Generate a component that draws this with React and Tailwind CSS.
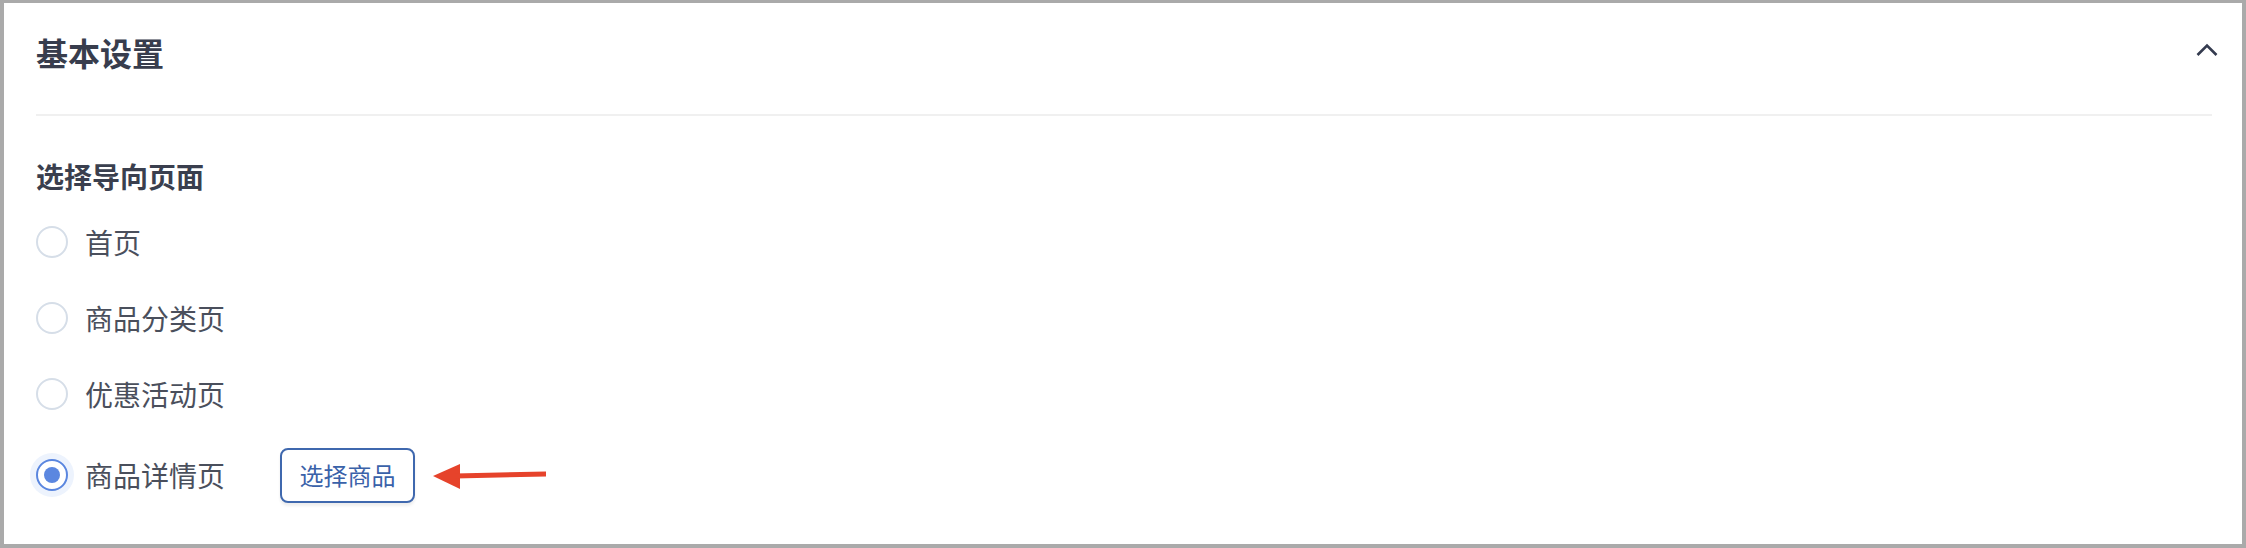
import React, { useState } from "react";

const options = [
  { value: "home", label: "首页" },
  { value: "category", label: "商品分类页" },
  { value: "promo", label: "优惠活动页" },
  { value: "detail", label: "商品详情页" },
];

function Radio({ checked }) {
  if (checked) {
    return (
      <span className="flex h-[32px] w-[32px] shrink-0 items-center justify-center rounded-full border-2 border-[#5a86df] bg-white ring-[6px] ring-[#edf3fd]">
        <span className="h-[16px] w-[16px] rounded-full bg-[#5b87e0]" />
      </span>
    );
  }
  return <span className="h-[32px] w-[32px] shrink-0 rounded-full border-2 border-[#d6dee8] bg-white" />;
}

export default function App() {
  const [selected, setSelected] = useState("detail");
  const [open, setOpen] = useState(true);

  return (
    <div
      className="h-[548px] border-[4px] border-t-[3px] border-[#aaaaaa] bg-white pl-[32px] pr-[30px]"
      style={{ fontFamily: '"Noto Sans CJK SC", "Noto Sans", sans-serif' }}
    >
      {/* header */}
      <div className="flex h-[111px] items-start justify-between pt-[25px]">
        <h2 className="text-[32px] leading-[48px] font-semibold text-[#383d4d]">基本设置</h2>
        <button
          onClick={() => setOpen(!open)}
          className="mr-[-6px] flex h-[48px] items-center pb-[4px]"
        >
          <svg width="22" height="14" viewBox="0 0 22 14" fill="none">
            <path d="M1.5 12 L11 2.5 L20.5 12" stroke="#343b4f" strokeWidth="2.6" />
          </svg>
        </button>
      </div>
      <div className="h-[2px] bg-[#f0f0f0]" />

      {open && (
        <div>
          <div className="mt-[39px] text-[28px] leading-[42px] font-semibold text-[#3a3f4e]">选择导向页面</div>
          <ul className="mt-[7px]">
            {options.map((o) => (
              <li
                key={o.value}
                onClick={() => setSelected(o.value)}
                className={
                  o.value === "detail"
                    ? "flex h-[86px] cursor-pointer items-center"
                    : "flex h-[76px] cursor-pointer items-center"
                }
              >
                <Radio checked={selected === o.value} />
                <span className="ml-[17px] text-[28px] leading-[40px] text-[#4a4f5c]">{o.label}</span>
                {o.value === "detail" && (
                  <>
                    <button className="ml-[55px] flex h-[55px] w-[135px] items-center justify-center rounded-[8px] border-2 border-[#3f68ae] bg-white text-[24px] text-[#3a62a9] shadow-[0_3px_3px_rgba(0,0,0,0.07)]">
                      选择商品
                    </button>
                    <svg className="ml-[18px] mt-[4px]" width="114" height="28" viewBox="0 0 114 28">
                      <polygon points="0,13 27,1 27,26" fill="#e6432b" />
                      <polygon points="22,10.5 113,8.5 113,13.5 22,15.5" fill="#e6432b" />
                    </svg>
                  </>
                )}
              </li>
            ))}
          </ul>
        </div>
      )}
    </div>
  );
}
